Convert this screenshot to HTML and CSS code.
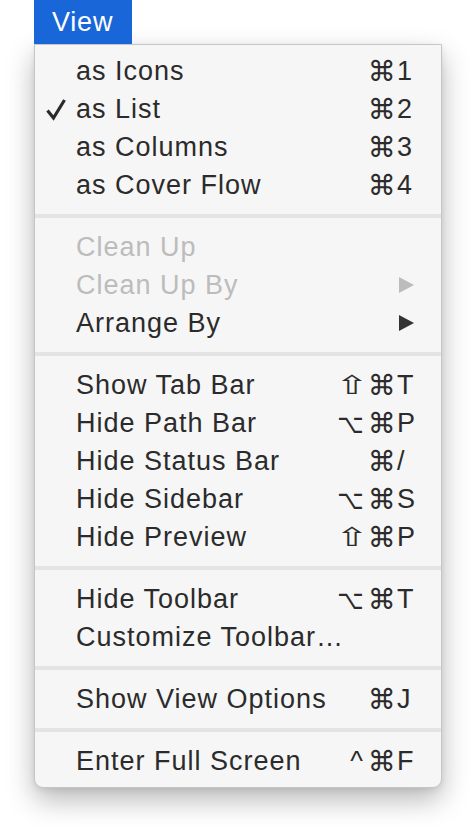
FILE: index.html
```html
<!DOCTYPE html>
<html>
<head>
<meta charset="utf-8">
<link rel="stylesheet" href="styles.css">
</head>
<body>
<div class="bar"><div class="tab">View</div></div>
<div class="menu">
  <div class="item"><span class="check"></span><span class="label">as Icons</span><span class="mods"><span class="cmd">⌘</span></span><span class="key">1</span></div>
  <div class="item"><span class="check"><svg width="22" height="24" viewBox="0 0 22 24"><path class="tick" d="M2.5 13.5 L8.5 21 L19.5 3"/></svg></span><span class="label">as List</span><span class="mods"><span class="cmd">⌘</span></span><span class="key">2</span></div>
  <div class="item"><span class="check"></span><span class="label">as Columns</span><span class="mods"><span class="cmd">⌘</span></span><span class="key">3</span></div>
  <div class="item"><span class="check"></span><span class="label">as Cover Flow</span><span class="mods"><span class="cmd">⌘</span></span><span class="key">4</span></div>
  <div class="sep"></div>
  <div class="item disabled"><span class="check"></span><span class="label">Clean Up</span><span class="mods"></span><span class="key"></span></div>
  <div class="item disabled"><span class="check"></span><span class="label">Clean Up By</span><span class="mods"></span><span class="key"><svg class="arrow" width="17" height="18" viewBox="0 0 17 18"><path d="M1 1 L16 9 L1 17 Z"/></svg></span></div>
  <div class="item"><span class="check"></span><span class="label">Arrange By</span><span class="mods"></span><span class="key"><svg class="arrow" width="17" height="18" viewBox="0 0 17 18"><path d="M1 1 L16 9 L1 17 Z"/></svg></span></div>
  <div class="sep"></div>
  <div class="item"><span class="check"></span><span class="label">Show Tab Bar</span><span class="mods"><span class="shift">⇧</span><span class="cmd">⌘</span></span><span class="key">T</span></div>
  <div class="item"><span class="check"></span><span class="label">Hide Path Bar</span><span class="mods"><span class="opt">⌥</span><span class="cmd">⌘</span></span><span class="key">P</span></div>
  <div class="item"><span class="check"></span><span class="label">Hide Status Bar</span><span class="mods"><span class="cmd">⌘</span></span><span class="key">/</span></div>
  <div class="item"><span class="check"></span><span class="label">Hide Sidebar</span><span class="mods"><span class="opt">⌥</span><span class="cmd">⌘</span></span><span class="key">S</span></div>
  <div class="item"><span class="check"></span><span class="label">Hide Preview</span><span class="mods"><span class="shift">⇧</span><span class="cmd">⌘</span></span><span class="key">P</span></div>
  <div class="sep"></div>
  <div class="item"><span class="check"></span><span class="label">Hide Toolbar</span><span class="mods"><span class="opt">⌥</span><span class="cmd">⌘</span></span><span class="key">T</span></div>
  <div class="item"><span class="check"></span><span class="label">Customize Toolbar…</span><span class="mods"></span><span class="key"></span></div>
  <div class="sep"></div>
  <div class="item"><span class="check"></span><span class="label">Show View Options</span><span class="mods"><span class="cmd">⌘</span></span><span class="key">J</span></div>
  <div class="sep"></div>
  <div class="item"><span class="check"></span><span class="label">Enter Full Screen</span><span class="mods"><span class="ctrl">^</span><span class="cmd">⌘</span></span><span class="key">F</span></div>
</div>
</body>
</html>
```
FILE: styles.css
```css
html, body {
  margin: 0;
  padding: 0;
  background: #ffffff;
}
body {
  font-family: "Liberation Sans", Arial, sans-serif;
  font-size: 27px;
  color: #2b2b2b;
  padding-bottom: 40px;
}
.bar {
  height: 44px;
  padding-left: 34px;
  position: relative;
  z-index: 2;
}
.tab {
  width: 98px;
  height: 44px;
  background: #1866d8;
  color: #ffffff;
  line-height: 44px;
  padding-left: 18px;
  box-sizing: border-box;
  letter-spacing: 0.8px;
}
.menu {
  margin-left: 34px;
  width: 408px;
  box-sizing: border-box;
  background: #f6f6f6;
  border: 1px solid #c6c6c6;
  border-radius: 0 0 9px 9px;
  padding: 7px 0 7px 0;
  box-shadow: 0 12px 28px rgba(0, 0, 0, 0.28), 0 2px 6px rgba(0, 0, 0, 0.08);
}
.item {
  display: flex;
  align-items: center;
  height: 38px;
  padding-right: 24px;
}
.check {
  width: 41px;
  box-sizing: border-box;
  padding-left: 10px;
  display: flex;
  align-items: center;
}
.tick {
  fill: none;
  stroke: #2b2b2b;
  stroke-width: 3.2;
  stroke-linecap: butt;
  stroke-linejoin: miter;
}
.label {
  flex: 1;
  letter-spacing: 1px;
  white-space: nowrap;
}
.mods {
  display: flex;
  align-items: center;
  justify-content: flex-end;
  gap: 5px;
  padding-right: 0;
  font-family: "DejaVu Sans", sans-serif;
  font-size: 27px;
}
.mods span {
  display: inline-block;
}
.cmd {
  font-size: 28px;
}
.shift {
  transform: scaleX(1.55);
  margin-right: 0;
  font-size: 26px;
}
.opt {
  font-size: 27px;
  transform: scaleX(0.85);
  margin-right: -3px;
}
.ctrl {
  font-family: "Liberation Sans", sans-serif;
  font-size: 27px;
}
.key {
  width: 20px;
  display: flex;
  align-items: center;
  justify-content: flex-start;
  padding-left: 1px;
}
.arrow {
  fill: #333333;
  margin-left: 1px;
}
.disabled {
  color: #bcbcbc;
}
.disabled .arrow {
  fill: #bcbcbc;
}
.sep {
  height: 4px;
  background: #e4e4e4;
  margin: 10px 0;
}
```
